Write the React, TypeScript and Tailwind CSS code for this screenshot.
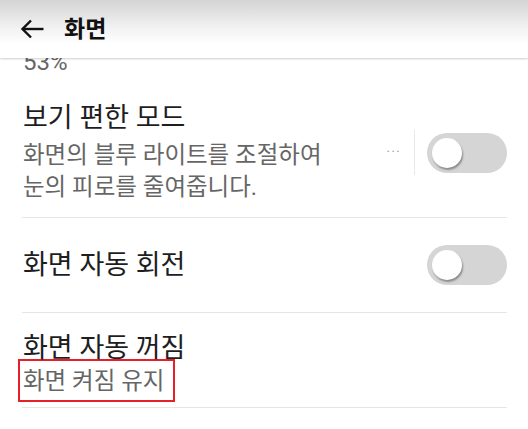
import React from "react";

function Toggle() {
  return (
    <div className="relative w-[80px] h-[40px] rounded-full bg-[#d5d5d5] shrink-0">
      <div className="absolute left-[5px] top-[5px] w-[30px] h-[30px] rounded-full bg-white shadow-[1px_2px_2px_rgba(0,0,0,0.35)]" />
    </div>
  );
}

export default function App() {
  const font = { fontFamily: "Roboto, 'Noto Sans CJK KR', sans-serif" };
  return (
    <div className="w-[528px] h-[429px] overflow-hidden bg-white" style={font}>
      <div className="relative z-10 h-[58px] flex items-center bg-[linear-gradient(to_bottom,#d4d4d4_0px,#f2f2f2_28px,#ffffff_45px)] shadow-[0_1px_2px_rgba(0,0,0,0.2)]">
        <svg className="ml-[20px]" width="24" height="20" viewBox="0 0 24 20" fill="none" stroke="#111" strokeWidth="2.4" strokeLinecap="butt" strokeLinejoin="miter">
          <path d="M23.5 10H2.5" />
          <path d="M11 1.5L2.5 10L11 18.5" />
        </svg>
        <span className="ml-[20px] text-[23px] font-bold text-[#111] leading-none">화면</span>
      </div>
      <div className="-mt-[8px] ml-[22px] mr-[21px]">
        <div className="pl-[1px] h-[24px] text-[24px] leading-[24px] text-[#666]">53%</div>
        <div className="flex items-center border-b border-[#e6e6e6] pt-[28px] pb-[14px]">
          <div className="flex-1 pl-[1px]">
            <div className="text-[27px] leading-[32px] text-[#1e1e1e]">보기 편한 모드</div>
            <div className="mt-[5px] text-[23.5px] leading-[32px] text-[#666]">
              화면의 블루 라이트를 조절하여
              <br />
              눈의 피로를 줄여줍니다.
            </div>
          </div>
          <div className="flex items-center">
            <span className="text-[15px] leading-none text-[#a8a8a8] tracking-[1px]">···</span>
            <div className="ml-[13px] w-px h-[45px] bg-[#e8e8e8]" />
            <div className="ml-[12px]">
              <Toggle />
            </div>
          </div>
        </div>
        <div className="flex items-center h-[95px] border-b border-[#e6e6e6]">
          <div className="flex-1 pl-[1px] text-[27px] leading-[32px] text-[#1e1e1e]">화면 자동 회전</div>
          <Toggle />
        </div>
        <div className="border-b border-[#e6e6e6] pt-[19px] pb-[5px]">
          <div className="pl-[1px] text-[27px] leading-[32px] text-[#1e1e1e]">화면 자동 꺼짐</div>
          <div className="-mt-[5px] -ml-[4px] w-[157px] h-[43px] border-2 border-[#e5202a] flex items-center pl-[3px]">
            <span className="text-[23.5px] leading-[32px] text-[#666]">화면 켜짐 유지</span>
          </div>
        </div>
      </div>
    </div>
  );
}
